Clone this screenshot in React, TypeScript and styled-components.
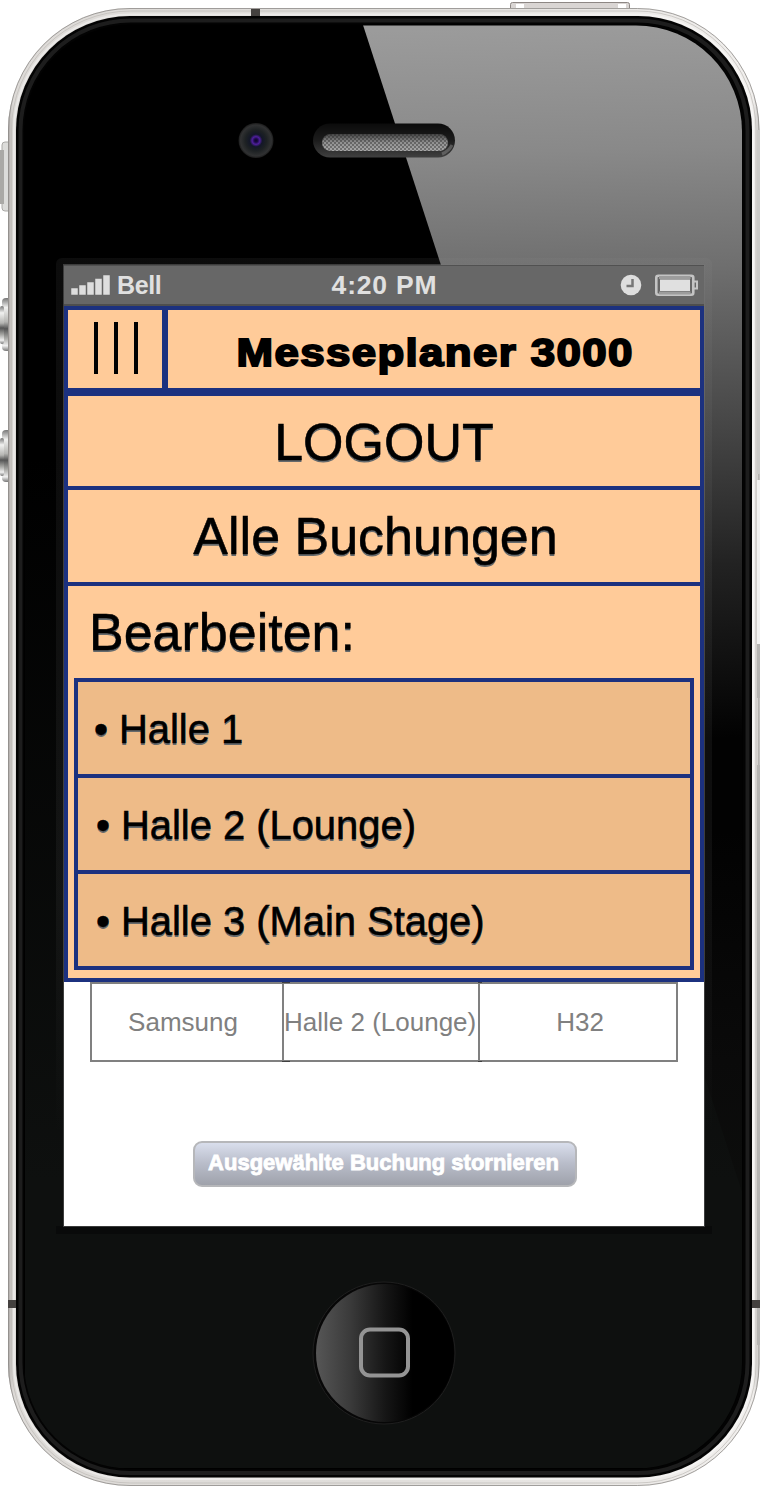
import React from 'react';
import styled, { createGlobalStyle } from 'styled-components';

const navy = '#1c317f';
const peach = '#ffcb99';
const tan = '#eebb88';

const GlobalStyle = createGlobalStyle`
  * { box-sizing: border-box; }
  body { margin: 0; background: #fff; }
`;

const Phone = styled.main`
  position: relative;
  width: 760px;
  height: 1486px;
  padding: 265px 56px 0 64px;
  overflow: hidden;
  font-family: 'Liberation Sans', Arial, sans-serif;
  color: #000;
`;

const Chassis = styled.svg`
  position: absolute;
  inset: 0;
  display: block;
`;

const Screen = styled.section`
  position: relative;
  width: 640px;
  height: 961px;
  background: #fff;
  box-shadow: 0 0 0 1px rgba(120, 120, 120, 0.45);
`;

const StatusBar = styled.div`
  display: grid;
  grid-template-columns: 1fr auto 1fr;
  align-items: center;
  height: 41px;
  padding: 0 6px 0 7px;
  background: #676767;
  border-top: 1px solid #515151;
  border-bottom: 2px solid #4e4e4e;
  color: #e0e0e0;
  font-weight: bold;
`;

const Carrier = styled.div`
  display: flex;
  align-items: center;
  gap: 7px;
  font-size: 25px;
  line-height: 38px;
  letter-spacing: -0.4px;
`;

const Clock = styled.div`
  font-size: 26.5px;
  line-height: 38px;
  letter-spacing: 0.8px;
`;

const Indicators = styled.div`
  display: flex;
  justify-content: flex-end;
  align-items: center;
  gap: 13px;
  height: 38px;
`;

const Header = styled.header`
  display: flex;
  height: 86px;
  border: 4px solid ${navy};
  background: ${peach};
`;

const MenuButton = styled.button`
  display: flex;
  gap: 16px;
  width: 100px;
  padding: 12px 0 0 26px;
  border: 0;
  border-right: 6px solid ${navy};
  background: transparent;
`;

const MenuBar = styled.span`
  width: 4px;
  height: 52px;
  background: #000;
`;

const Title = styled.h1`
  flex: 1;
  margin: 0;
  padding: 4px 0 0 2px;
  text-align: center;
  font: bold 39px/78px 'Liberation Sans', Arial, sans-serif;
  letter-spacing: 1.2px;
  -webkit-text-stroke: 1.9px #000;
  transform: scaleX(1.125);
  white-space: nowrap;
`;

const Menu = styled.nav`
  height: 590px;
  border: 4px solid ${navy};
  background: ${peach};
  text-shadow: 0 2px 0 #666a6c;
  -webkit-text-stroke: 0.5px #000;
`;

const MenuRow = styled.div<{ $height: number; $shift: number }>`
  height: ${(p) => p.$height}px;
  border-bottom: 4px solid ${navy};
  font-size: 52px;
  line-height: 92px;
  text-align: center;
  padding-right: ${(p) => p.$shift}px;
`;

const SectionLabel = styled.div`
  height: 92px;
  padding-left: 21px;
  font-size: 52px;
  line-height: 92px;
`;

const HallList = styled.ul`
  list-style: none;
  margin: 0 6px;
  padding: 0;
  border: 4px solid ${navy};
  background: ${tan};
`;

const Hall = styled.li`
  display: flex;
  gap: 11px;
  height: 96px;
  padding-left: 18px;
  font-size: 40px;
  line-height: 95px;
  letter-spacing: -0.05px;
  border-bottom: 4px solid ${navy};

  &:last-child {
    height: 92px;
    border-bottom: 0;
  }
  &:first-child {
    padding-left: 16px;
  }
`;

const BookingRow = styled.div`
  display: grid;
  grid-template-columns: 192px 196px 196px;
  width: 588px;
  height: 80px;
  margin-left: 26px;
  border: 2px solid #808080;
  color: #808080;
  font-size: 26px;
  line-height: 76px;
`;

const BookingCell = styled.div<{ $tick?: number; $before?: number; $after?: number }>`
  position: relative;
  text-align: center;
  white-space: nowrap;
  padding-left: ${(p) => p.$before ?? 0}px;
  padding-right: ${(p) => p.$after ?? 0}px;
  border-left: ${(p) => (p.$tick ? '2px solid #808080' : '0')};
  margin-left: ${(p) => (p.$tick ? '-2px' : '0')};

  &::before,
  &::after {
    content: '';
    position: absolute;
    left: -2px;
    width: ${(p) => p.$tick ?? 0}px;
    height: 1px;
    background: #404040;
  }
  &::before { top: -2px; }
  &::after { bottom: -2px; }
`;

const CancelButton = styled.button`
  display: block;
  width: 384px;
  height: 46px;
  margin: 79px 0 0 129px;
  padding: 0 3px 2px 0;
  border: 2px solid #b6b7ba;
  border-radius: 9px;
  background: linear-gradient(#d9deec, #b9bdca 48%, #9fa2ab);
  color: #fff;
  font: bold 22px/38px 'Liberation Sans', Arial, sans-serif;
  -webkit-text-stroke: 0.8px #fff;
  white-space: nowrap;
`;

const PhoneBody = () => (
  <Chassis width="760" height="1486" viewBox="0 0 760 1486" aria-hidden="true">
    <defs>
      <linearGradient id="steel" x1="0" x2="1">
        <stop offset="0" stopColor="#a09c9a" />
        <stop offset="0.003" stopColor="#c4c0bd" />
        <stop offset="0.007" stopColor="#dddad7" />
        <stop offset="0.5" stopColor="#e0dedb" />
        <stop offset="0.992" stopColor="#f1efed" />
        <stop offset="1" stopColor="#c6c4c2" />
      </linearGradient>
      <linearGradient id="glass" x1="0" y1="0" x2="0" y2="1">
        <stop offset="0.3" stopColor="#000" />
        <stop offset="0.8" stopColor="#0e100f" />
        <stop offset="1" stopColor="#0e100f" />
      </linearGradient>
      <linearGradient id="gloss" gradientUnits="userSpaceOnUse" x1="560" y1="26" x2="590" y2="1180">
        <stop offset="0" stopColor="#9b9b9b" />
        <stop offset="0.108" stopColor="#898989" />
        <stop offset="0.21" stopColor="#6f6f6f" />
        <stop offset="0.35" stopColor="#464646" />
        <stop offset="0.47" stopColor="#222" />
        <stop offset="0.62" stopColor="#020202" />
        <stop offset="0.7" stopColor="#020202" />
        <stop offset="0.9" stopColor="#0a0a0a" />
        <stop offset="1" stopColor="#0c0d0c" />
      </linearGradient>
      <linearGradient id="recess" x1="0" x2="0" y1="0" y2="1">
        <stop offset="0" stopColor="#999" stopOpacity="0.08" />
        <stop offset="0.65" stopColor="#999" stopOpacity="0.08" />
        <stop offset="0.9" stopColor="#999" stopOpacity="0" />
      </linearGradient>
      <linearGradient id="key" x1="0" x2="0" y1="0" y2="1">
        <stop offset="0" stopColor="#777" />
        <stop offset="0.18" stopColor="#f1f1f0" />
        <stop offset="0.45" stopColor="#b5b5b2" />
        <stop offset="0.58" stopColor="#555" />
        <stop offset="0.75" stopColor="#a5a5a2" />
        <stop offset="0.9" stopColor="#f0f0f0" />
        <stop offset="1" stopColor="#777" />
      </linearGradient>
      <linearGradient id="home" x1="0" x2="1">
        <stop offset="0" stopColor="#565656" />
        <stop offset="0.25" stopColor="#3a3a3a" />
        <stop offset="0.5" stopColor="#161616" />
        <stop offset="0.7" stopColor="#000" />
      </linearGradient>
      <linearGradient id="speaker" x1="0" x2="0" y1="0" y2="1">
        <stop offset="0" stopColor="#0b0b0b" />
        <stop offset="0.5" stopColor="#1c1c1c" />
        <stop offset="1" stopColor="#404040" />
      </linearGradient>
      <linearGradient id="mesh" x1="0" x2="0" y1="0" y2="1">
        <stop offset="0" stopColor="#444" />
        <stop offset="0.5" stopColor="#909090" />
        <stop offset="1" stopColor="#a8a8a8" />
      </linearGradient>
      <radialGradient id="lens">
        <stop offset="0" stopColor="#0b0626" />
        <stop offset="0.1" stopColor="#1c0a48" />
        <stop offset="0.22" stopColor="#4e1e9c" />
        <stop offset="0.36" stopColor="#131728" />
        <stop offset="0.6" stopColor="#1d2123" />
        <stop offset="0.88" stopColor="#303132" />
        <stop offset="1" stopColor="#1b1b1b" />
      </radialGradient>
      <pattern id="dots" width="4" height="4" patternUnits="userSpaceOnUse">
        <path d="M0 0h2v2H0zM2 2h2v2H2z" fill="#222" opacity="0.4" />
      </pattern>
      <clipPath id="glassClip">
        <rect x="24" y="25.5" width="718" height="1443" rx="106" />
      </clipPath>
    </defs>

    {/* side keys and the power key */}
    <rect x="2" y="142" width="9" height="69" rx="3" fill="#dcdcda" stroke="#aaa9a6" />
    <rect x="0" y="150" width="4" height="54" fill="#aaa9a6" />
    <rect x="2" y="298" width="10" height="53" rx="4" fill="url(#key)" />
    <rect x="0" y="306" width="4" height="38" rx="2" fill="url(#key)" />
    <rect x="2" y="430" width="10" height="52" rx="4" fill="url(#key)" />
    <rect x="0" y="438" width="4" height="38" rx="2" fill="url(#key)" />
    <rect x="510.500" y="2.500" width="119" height="9" rx="2" fill="#d9d5d3" stroke="#8d8784" />
    <rect x="516" y="4" width="8" height="4" fill="#fff" />
    <rect x="618" y="4" width="8" height="4" fill="#fff" />

    {/* steel band */}
    <rect x="8" y="8" width="751.500" height="1478" rx="122" fill="url(#steel)" />
    <rect x="8.500" y="8.500" width="750.500" height="1477" rx="121.500" fill="none" stroke="#8f8c8a" opacity="0.8" />
    <rect x="11.500" y="11" width="744.500" height="1472" rx="119" fill="none" stroke="#bdbab7" opacity="0.7" />
    <rect x="14" y="14.500" width="739.500" height="1464.500" rx="116" fill="none" stroke="#fff" strokeWidth="2" opacity="0.4" />
    <rect x="757" y="130" width="3" height="344" fill="#cbcac8" />
    <rect x="757" y="480" width="3" height="164" fill="#f3f3f2" />
    <rect x="757" y="644" width="3" height="54" fill="#b5b4b2" />
    <rect x="757" y="765" width="3" height="580" fill="#b5b4b2" />
    <rect x="251" y="9" width="9" height="8" fill="#44413f" />
    <rect x="8" y="1300" width="9" height="8" fill="#44413f" />
    <rect x="751" y="1300" width="9" height="8" fill="#44413f" />

    {/* dark gasket and front glass */}
    <rect x="16" y="16" width="736" height="1461.500" rx="114" fill="#030303" />
    <rect x="20.500" y="20.500" width="727" height="1452.500" rx="110" fill="none" stroke="#1d1d1d" strokeWidth="4" />
    <rect x="24" y="24.500" width="718.500" height="1444.500" rx="107" fill="#000" />
    <g clipPath="url(#glassClip)">
      <rect x="25" y="25" width="717" height="1443" fill="url(#glass)" />
      <path d="M363 25H742V1192Z" fill="url(#gloss)" />
      <rect x="56" y="258" width="656" height="975" rx="6" fill="url(#recess)" />
      <rect x="56" y="1226" width="656" height="8" fill="#060606" opacity="0.6" />
    </g>

    {/* camera and earpiece */}
    <circle cx="256" cy="140.500" r="17.500" fill="url(#lens)" />
    <rect x="313" y="123.500" width="142" height="34" rx="17" fill="url(#speaker)" />
    <rect x="322" y="134" width="126" height="17" rx="8.500" fill="url(#mesh)" />
    <rect x="322" y="134" width="126" height="17" rx="8.500" fill="url(#dots)" />
    <path d="M442 154Q449 151 452 145" fill="none" stroke="#888" strokeWidth="3" opacity="0.5" />

    {/* home button */}
    <circle cx="384" cy="1353" r="71" fill="#070707" stroke="#1f1f1f" />
    <circle cx="385" cy="1353" r="69" fill="url(#home)" />
    <rect x="361" y="1329.500" width="47" height="46" rx="9" fill="none" stroke="#949494" strokeWidth="4" />
  </Chassis>
);

const Signal = () => (
  <svg width="39" height="22" viewBox="0 0 39 22">
    <path d="M0 14h7v7H0zM8 11h7v10H8zM16 8h7v13h-7zM24 4.500h7V21h-7zM32 1h7v20h-7z" fill="#dedede" stroke="#676767" strokeWidth=".5" />
  </svg>
);

const AlarmIcon = () => (
  <svg width="22" height="22" viewBox="0 0 22 22">
    <circle cx="11" cy="11" r="10.300" fill="#dedede" />
    <path d="M12.500 5v7H6.500" fill="none" stroke="#777" strokeWidth="2.500" />
  </svg>
);

const BatteryIcon = () => (
  <svg width="43" height="23" viewBox="0 0 43 23">
    <rect x="1.300" y="1.800" width="37" height="19" rx="2" fill="#676767" stroke="#c4c4c4" strokeWidth="2.600" />
    <path d="M4 3.500h31.500" stroke="#9d9d9d" strokeWidth="3" />
    <path d="M4 19h31.500" stroke="#9d9d9d" strokeWidth="3" />
    <rect x="5" y="5.500" width="30" height="11.500" fill="#e0e0e0" />
    <path d="M39 7.500h3v7h-3" fill="none" stroke="#c5c5c5" strokeWidth="2" />
  </svg>
);

const halls = ['Halle 1', 'Halle 2 (Lounge)', 'Halle 3 (Main Stage)'];

export default function App() {
  return (
    <>
      <GlobalStyle />
      <Phone>
        <PhoneBody />
        <Screen>
          <StatusBar>
            <Carrier>
              <Signal />
              <span>Bell</span>
            </Carrier>
            <Clock>4:20 PM</Clock>
            <Indicators>
              <AlarmIcon />
              <BatteryIcon />
            </Indicators>
          </StatusBar>
          <Header>
            <MenuButton aria-label="Menü">
              <MenuBar />
              <MenuBar />
              <MenuBar />
            </MenuButton>
            <Title>Messeplaner 3000</Title>
          </Header>
          <Menu>
            <MenuRow $height={94} $shift={0}>LOGOUT</MenuRow>
            <MenuRow $height={96} $shift={17}>Alle Buchungen</MenuRow>
            <SectionLabel>Bearbeiten:</SectionLabel>
            <HallList>
              {halls.map((hall) => (
                <Hall key={hall}>
                  <span>•</span>
                  <span>{hall}</span>
                </Hall>
              ))}
            </HallList>
          </Menu>
          <BookingRow>
            <BookingCell $after={10}>Samsung</BookingCell>
            <BookingCell $tick={8} $after={4}>Halle 2 (Lounge)</BookingCell>
            <BookingCell $tick={4} $before={4}>H32</BookingCell>
          </BookingRow>
          <CancelButton>Ausgewählte Buchung stornieren</CancelButton>
        </Screen>
      </Phone>
    </>
  );
}
